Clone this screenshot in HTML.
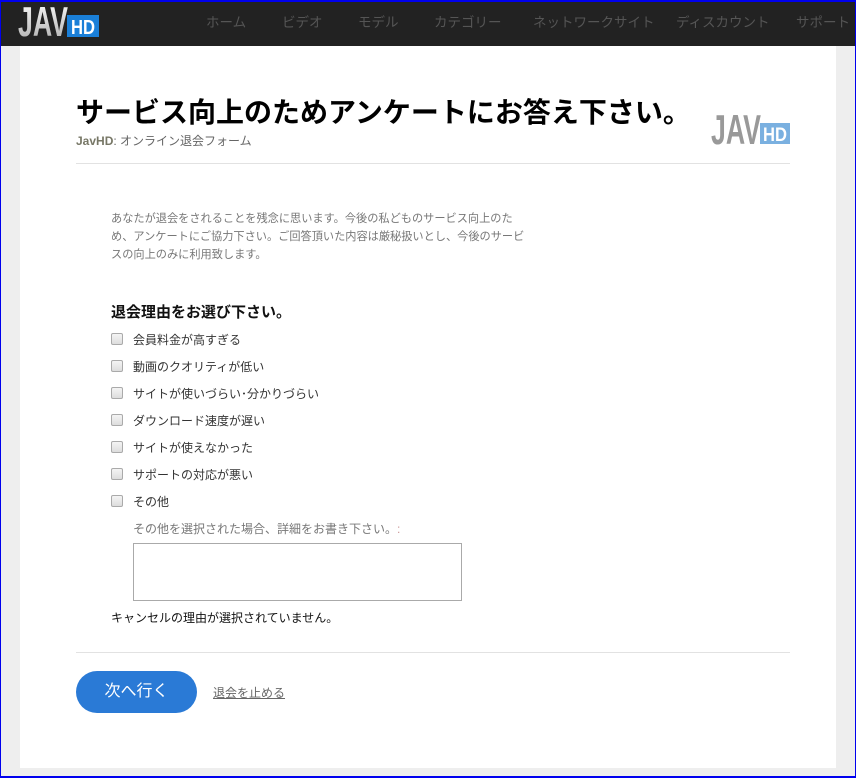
<!DOCTYPE html>
<html><head><meta charset="utf-8"><style>
*{margin:0;padding:0;box-sizing:border-box}
html,body{width:856px;height:778px;overflow:hidden}
body{background:#eeeeee;font-family:"Liberation Sans","Noto Sans CJK JP",sans-serif;position:relative}
.frame{position:absolute;left:0;top:0;width:856px;height:778px;border:1px solid #0000ee;border-top-width:2px;border-bottom-width:2px;pointer-events:none}
.nav{position:absolute;left:0;top:0;width:856px;height:46px;background:#222}
.nav span{position:absolute;top:11px;font-size:13.5px;color:#555}
.logo{position:absolute;left:18px;top:2px}
.panel{position:absolute;left:20px;top:46px;width:816px;height:722px;background:#fff}
.abs{position:absolute}
.cb{position:absolute;left:111px;width:12px;height:12px;border:1px solid #aaa;border-radius:2px;background:linear-gradient(#f4f4f4,#ddd)}
.lbl{position:absolute;left:133px;font-size:12px;color:#333}
</style></head><body>
<div class="nav">
<svg class="logo" width="84" height="38" viewBox="0 0 84 38"><defs><linearGradient id="g" x1="0" y1="0" x2="0" y2="1"><stop offset="0" stop-color="#fff"/><stop offset="1" stop-color="#aaa"/></linearGradient></defs>
<text x="0" y="34" font-family="Liberation Sans" font-weight="bold" font-size="42" fill="url(#g)" textLength="50" lengthAdjust="spacingAndGlyphs">JAV</text>
<rect x="49" y="13" width="32" height="22" fill="#1a7fd8"/><text x="53" y="32" font-family="Liberation Sans" font-weight="bold" font-size="20" fill="#fff" textLength="24" lengthAdjust="spacingAndGlyphs">HD</text></svg>
<span style="left:206px">ホーム</span><span style="left:282px">ビデオ</span><span style="left:358px">モデル</span><span style="left:434px">カテゴリー</span><span style="left:533px">ネットワークサイト</span><span style="left:676px">ディスカウント</span><span style="left:796px">サポート</span>
</div>
<div class="panel"></div>
<div class="abs" style="left:76px;top:91px;font-size:28px;font-weight:bold;color:#000;white-space:nowrap">サービス向上のためアンケートにお答え下さい。</div>
<div class="abs" style="left:76px;top:132px;font-size:12px;color:#666"><b style="color:#776">JavHD</b>: オンライン退会フォーム</div>
<svg class="abs" style="left:711px;top:108px" width="80" height="38" viewBox="0 0 80 38"><text x="0" y="36" font-family="Liberation Sans" font-weight="bold" font-size="42" fill="#999" textLength="50" lengthAdjust="spacingAndGlyphs">JAV</text><rect x="49" y="15" width="30" height="21" fill="#7ab0e0"/><text x="52" y="33" font-family="Liberation Sans" font-weight="bold" font-size="19" fill="#fff" textLength="24" lengthAdjust="spacingAndGlyphs">HD</text></svg>
<div class="abs" style="left:76px;top:163px;width:714px;height:1px;background:#e2e2e2"></div>
<div class="abs" style="left:111px;top:210px;width:422px;font-size:11.2px;line-height:18px;color:#777">あなたが退会をされることを残念に思います。今後の私どものサービス向上のため、アンケートにご協力下さい。ご回答頂いた内容は厳秘扱いとし、今後のサービスの向上のみに利用致します。</div>
<div class="abs" style="left:111px;top:301px;font-size:15px;color:#111;font-weight:bold">退会理由をお選び下さい。</div>
<div class="cb" style="top:333px"></div><div class="lbl" style="top:331px">会員料金が高すぎる</div>
<div class="cb" style="top:360px"></div><div class="lbl" style="top:358px">動画のクオリティが低い</div>
<div class="cb" style="top:387px"></div><div class="lbl" style="top:385px">サイトが使いづらい･分かりづらい</div>
<div class="cb" style="top:414px"></div><div class="lbl" style="top:412px">ダウンロード速度が遅い</div>
<div class="cb" style="top:441px"></div><div class="lbl" style="top:439px">サイトが使えなかった</div>
<div class="cb" style="top:468px"></div><div class="lbl" style="top:466px">サポートの対応が悪い</div>
<div class="cb" style="top:495px"></div><div class="lbl" style="top:493px">その他</div>
<div class="abs" style="left:133px;top:520px;font-size:12px;color:#777">その他を選択された場合、詳細をお書き下さい。<span style="color:#c99">:</span></div>
<div class="abs" style="left:133px;top:543px;width:329px;height:58px;border:1px solid #aaa"></div>
<div class="abs" style="left:111px;top:609px;font-size:12px;color:#111">キャンセルの理由が選択されていません。</div>
<div class="abs" style="left:76px;top:652px;width:714px;height:1px;background:#e2e2e2"></div>
<div class="abs" style="left:76px;top:671px;width:121px;height:42px;border-radius:21px;background:#2a7ad6;color:#fff;font-size:16px;text-align:center;line-height:42px">次へ行く</div>
<div class="abs" style="left:213px;top:684px;font-size:12px;color:#666;text-decoration:underline">退会を止める</div>
<div class="frame"></div>
</body></html>
